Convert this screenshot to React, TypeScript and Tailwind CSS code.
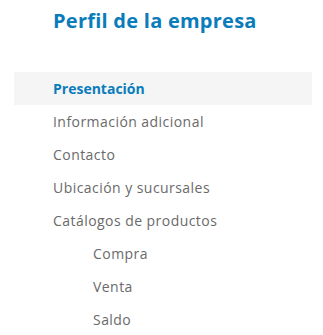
const items = [
  { label: "Presentación", active: true, sub: false },
  { label: "Información adicional", active: false, sub: false },
  { label: "Contacto", active: false, sub: false },
  { label: "Ubicación y sucursales", active: false, sub: false },
  { label: "Catálogos de productos", active: false, sub: false },
  { label: "Compra", active: false, sub: true },
  { label: "Venta", active: false, sub: true },
  { label: "Saldo", active: false, sub: true },
];

export default function App() {
  return (
    <div className="w-[323px] h-[335px] bg-white overflow-hidden font-['Open_Sans',sans-serif]">
      <h2 className="pl-[53px] pt-[7px] h-[72px] text-[20px] leading-[28px] font-bold tracking-[0.25px] text-[#0a7cbb]">
        Perfil de la empresa
      </h2>
      <ul className="flex flex-col ml-[14px] w-[298px]">
        {items.map((item) => (
          <li
            key={item.label}
            className={
              "h-[33px] flex items-center text-[14px] " +
              (item.sub ? "pl-[79px] " : "pl-[39px] ") +
              (item.active
                ? "bg-[#f5f5f5] font-bold text-[#0a7cbb]"
                : "text-[#6a6a6a] tracking-[0.45px]")
            }
          >
            {item.label}
          </li>
        ))}
      </ul>
    </div>
  );
}
